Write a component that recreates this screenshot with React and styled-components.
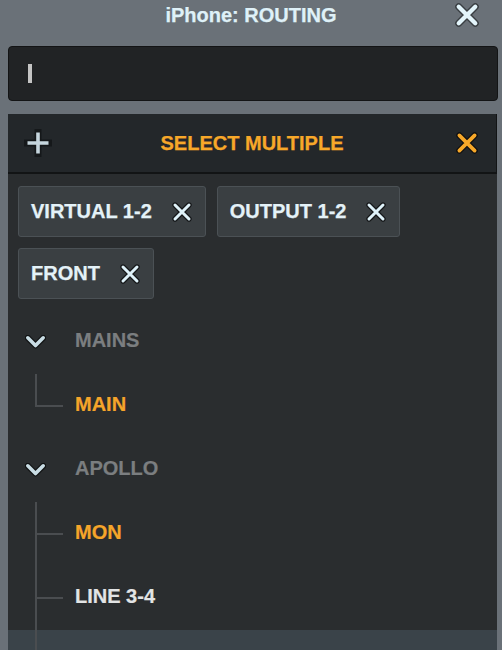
import React from "react";
import styled, { createGlobalStyle } from "styled-components";

const Global = createGlobalStyle`
  html, body { margin: 0; padding: 0; }
  body {
    background: #6a7178;
    font-family: "Liberation Sans", Arial, sans-serif;
    width: 502px;
    height: 650px;
    overflow: hidden;
  }
`;

const Page = styled.div`
  display: flex;
  flex-direction: column;
  height: 650px;
`;

const TitleBar = styled.div`
  display: grid;
  grid-template-columns: 1fr auto 1fr;
  align-items: center;
  height: 30px;
  padding: 0 22px;
`;

const Title = styled.div`
  grid-column: 2;
  color: #dff1f8;
  font-weight: 700;
  font-size: 20px;
  line-height: 30px;
  -webkit-text-stroke: 0.25px currentColor;
`;

const TitleClose = styled.div`
  grid-column: 3;
  justify-self: end;
  display: flex;
  width: 26px;
  height: 26px;
`;

const Search = styled.div`
  margin: 16px 4px 0 8px;
  height: 55px;
  box-sizing: border-box;
  background: #212325;
  border: 1px solid #131415;
  border-radius: 4px;
  display: flex;
  align-items: center;
  padding-left: 19px;
`;

const Caret = styled.div`
  width: 4px;
  height: 19px;
  background: #c4c4c4;
`;

const Panel = styled.div`
  margin: 13px 5px 0 8px;
  flex: 1;
  background: #2a2d2f;
  display: flex;
  flex-direction: column;
  overflow: hidden;
`;

const Header = styled.div`
  height: 58px;
  background: #23272a;
  border-bottom: 2px solid #121415;
  border-right: 1px solid #121415;
  display: grid;
  grid-template-columns: 60px 1fr 60px;
  align-items: center;
  flex-shrink: 0;
`;

const HeaderTitle = styled.div`
  text-align: center;
  color: #f7a829;
  font-weight: 700;
  font-size: 20px;
  -webkit-text-stroke: 0.25px currentColor;
`;

const IconCell = styled.div`
  display: flex;
  justify-content: ${(p) => p.$align || "center"};
  padding: ${(p) => p.$pad || "0"};
  align-items: center;
`;

const Tags = styled.div`
  display: flex;
  flex-wrap: wrap;
  gap: 11px;
  padding: 12px 10px 0 10px;
`;

const Tag = styled.div`
  height: 51px;
  box-sizing: border-box;
  display: flex;
  align-items: center;
  gap: 19px;
  padding: 0 12px 0 12px;
  background: #3a3f42;
  border: 1px solid #4b5155;
  border-radius: 3px;
  color: #e4f2f8;
  font-weight: 700;
  font-size: 20px;
  -webkit-text-stroke: 0.25px currentColor;
`;

const Tree = styled.div`
  display: flex;
  flex-direction: column;
  margin-top: 11px;
`;

const Row = styled.div`
  position: relative;
  height: 64px;
  flex-shrink: 0;
  display: grid;
  grid-template-columns: 67px 1fr;
  align-items: center;
  background: ${(p) => (p.$hover ? "#3a4349" : "transparent")};
`;

const Branch = styled.div`
  position: relative;
  height: 64px;
  &::before {
    content: "";
    position: absolute;
    left: 27px;
    top: 0;
    width: 2px;
    height: ${(p) => (p.$last ? "33px" : "64px")};
    background: #4a4d50;
  }
  &::after {
    content: ${(p) => (p.$noStub ? "none" : '""')};
    position: absolute;
    left: 27px;
    top: 31px;
    width: 28px;
    height: 2px;
    background: #4a4d50;
  }
`;

const Chevron = styled.div`
  display: flex;
  justify-content: flex-start;
  padding-left: 17px;
`;

const Label = styled.div`
  font-weight: 700;
  font-size: 20px;
  padding-bottom: 3px;
  -webkit-text-stroke: 0.2px currentColor;
  color: ${(p) =>
    p.$kind === "group" ? "#7b7e80" : p.$kind === "active" ? "#f5a52a" : "#e2e4e5"};
`;

const Cross = ({ size = 22, color = "#dff2f9", outline = "#151719", w = 3.2 }) => (
  <svg width={size} height={size} viewBox="0 0 22 22">
    <path d="M4 4 L18 18 M18 4 L4 18" stroke={outline} strokeWidth={w + 2.4} strokeLinecap="round" />
    <path d="M4 4 L18 18 M18 4 L4 18" stroke={color} strokeWidth={w} strokeLinecap="round" />
  </svg>
);

const Plus = () => (
  <svg width="28" height="28" viewBox="0 0 28 28">
    <path d="M14 2 V26 M2 14 H26" stroke="#15181a" strokeWidth="7" strokeLinecap="square" />
    <path d="M14 3.5 V24.5 M3.5 14 H24.5" stroke="#c6d6de" strokeWidth="3.6" strokeLinecap="butt" />
  </svg>
);

const Down = () => (
  <svg width="21" height="14" viewBox="0 0 21 14">
    <path d="M2.8 2.8 L10.5 10.5 L18.2 2.8" fill="none" stroke="#111314" strokeWidth="6" strokeLinecap="round" strokeLinejoin="round" />
    <path d="M2.8 2.8 L10.5 10.5 L18.2 2.8" fill="none" stroke="#c9dde5" strokeWidth="3.6" strokeLinecap="round" strokeLinejoin="round" />
  </svg>
);

const tags = ["VIRTUAL 1-2", "OUTPUT 1-2", "FRONT"];

export default function App() {
  return (
    <Page>
      <Global />
      <TitleBar>
        <Title>iPhone: ROUTING</Title>
        <TitleClose>
          <Cross size={26} w={3.6} color="#e3f5fb" outline="#3a3f43" />
        </TitleClose>
      </TitleBar>
      <Search>
        <Caret />
      </Search>
      <Panel>
        <Header>
          <IconCell $align="flex-start" $pad="0 0 0 16px">
            <Plus />
          </IconCell>
          <HeaderTitle>SELECT MULTIPLE</HeaderTitle>
          <IconCell $align="flex-end" $pad="0 17px 0 0">
            <Cross size={24} w={3.4} color="#f7a829" outline="#111" />
          </IconCell>
        </Header>
        <Tags>
          {tags.map((t) => (
            <Tag key={t}>
              {t}
              <Cross size={22} w={3} />
            </Tag>
          ))}
        </Tags>
        <Tree>
          <Row>
            <Chevron>
              <Down />
            </Chevron>
            <Label $kind="group">MAINS</Label>
          </Row>
          <Row>
            <Branch $last />
            <Label $kind="active">MAIN</Label>
          </Row>
          <Row>
            <Chevron>
              <Down />
            </Chevron>
            <Label $kind="group">APOLLO</Label>
          </Row>
          <Row>
            <Branch />
            <Label $kind="active">MON</Label>
          </Row>
          <Row>
            <Branch />
            <Label $kind="item">LINE 3-4</Label>
          </Row>
          <Row $hover>
            <Branch $noStub />
            <Label $kind="item"></Label>
          </Row>
        </Tree>
      </Panel>
    </Page>
  );
}
